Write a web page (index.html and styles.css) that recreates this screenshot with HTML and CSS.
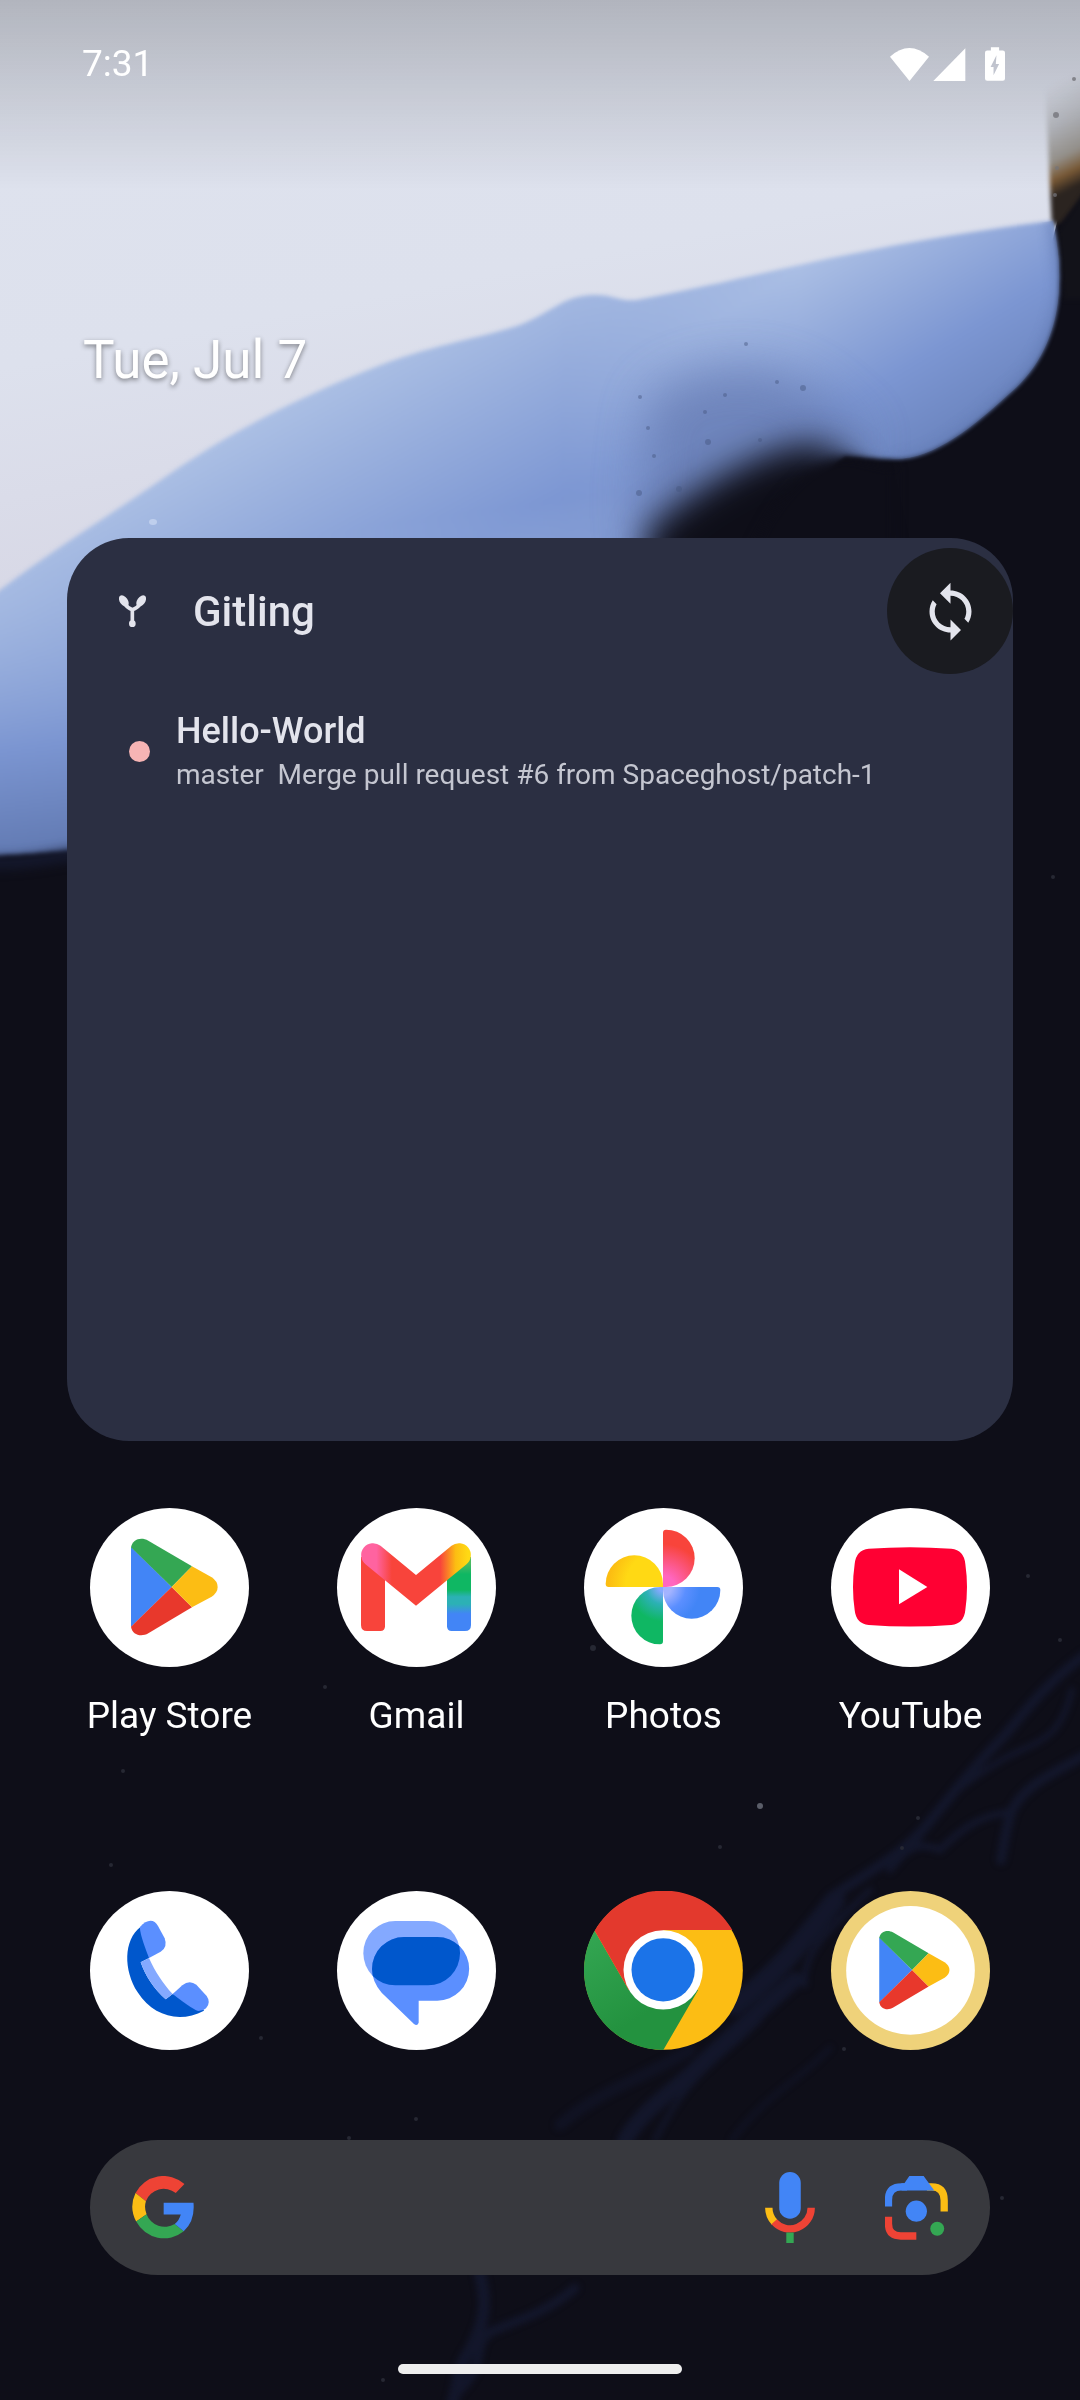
FILE: index.html
```html
<!DOCTYPE html>
<html lang="en">
<head>
<meta charset="utf-8">
<meta name="viewport" content="width=device-width, initial-scale=1">
<title>Home screen</title>
<link rel="stylesheet" href="styles.css">
</head>
<body>
<svg class="wallpaper" viewBox="0 0 1080 2400" preserveAspectRatio="xMidYMin slice" color-interpolation-filters="sRGB" aria-hidden="true">
  <defs>
    <linearGradient id="sky" x1="0" y1="0" x2="0.3" y2="1">
      <stop offset="0" stop-color="#dfe3ee"/><stop offset="0.5" stop-color="#dde1ed"/><stop offset="1" stop-color="#d4d2e1"/>
    </linearGradient>
    <linearGradient id="blue" gradientUnits="userSpaceOnUse" x1="330" y1="370" x2="520" y2="720">
      <stop offset="0" stop-color="#adc1e5"/><stop offset="0.55" stop-color="#7d97d3"/><stop offset="1" stop-color="#6f88c4"/>
    </linearGradient>
    <linearGradient id="blueLeft" gradientUnits="userSpaceOnUse" x1="0" y1="580" x2="40" y2="860">
      <stop offset="0" stop-color="#adc1e5" stop-opacity="0"/><stop offset="0.6" stop-color="#7b95d1"/><stop offset="1" stop-color="#6078b0"/>
    </linearGradient>
    <linearGradient id="blueRight" gradientUnits="userSpaceOnUse" x1="830" y1="250" x2="950" y2="450">
      <stop offset="0" stop-color="#aabee4"/><stop offset="0.6" stop-color="#7c96d2"/><stop offset="1" stop-color="#6a83bd"/>
    </linearGradient>
    <linearGradient id="fadeIn" gradientUnits="userSpaceOnUse" x1="560" y1="0" x2="800" y2="0">
      <stop offset="0" stop-color="#000"/><stop offset="1" stop-color="#fff"/>
    </linearGradient>
    <mask id="rightMask" maskUnits="userSpaceOnUse" x="0" y="0" width="1080" height="900"><rect width="1080" height="900" fill="url(#fadeIn)"/></mask>
    <linearGradient id="rim" gradientUnits="userSpaceOnUse" x1="1040" y1="90" x2="1085" y2="182">
      <stop offset="0" stop-color="#c4c7cd" stop-opacity="0"/><stop offset="0.4" stop-color="#b8bac0"/><stop offset="0.68" stop-color="#99958f"/><stop offset="0.85" stop-color="#7a5a36"/><stop offset="1" stop-color="#2b2420"/>
    </linearGradient>
    <linearGradient id="scrim" x1="0" y1="0" x2="0" y2="1">
      <stop offset="0" stop-color="#000" stop-opacity="0.2"/><stop offset="0.5" stop-color="#000" stop-opacity="0.1"/><stop offset="1" stop-color="#000" stop-opacity="0"/>
    </linearGradient>
    <filter id="soft2" filterUnits="userSpaceOnUse" x="-50" y="-50" width="1200" height="2500"><feGaussianBlur stdDeviation="2"/></filter>
    <filter id="soft3" filterUnits="userSpaceOnUse" x="-50" y="-50" width="1200" height="2500"><feGaussianBlur stdDeviation="3"/></filter>
    <filter id="soft6" filterUnits="userSpaceOnUse" x="-50" y="-50" width="1200" height="2500"><feGaussianBlur stdDeviation="6"/></filter>
    <filter id="soft18" filterUnits="userSpaceOnUse" x="-50" y="-50" width="1200" height="2500"><feGaussianBlur stdDeviation="17"/></filter>
    <filter id="soft24" filterUnits="userSpaceOnUse" x="-50" y="-50" width="1200" height="2500"><feGaussianBlur stdDeviation="24"/></filter>
    <clipPath id="waveClip"><path id="wave" d="M-20 604 L0 590 C60 545 110 515 158 482 C235 428 310 392 386 363 C435 345 480 338 517 326 C550 314 562 296 592 295 C612 294 620 302 637 300 C690 290 730 281 778 270 C870 249 960 232 1053 221 C1056 240 1060 255 1059 285 C1058 330 1040 368 1010 393 C975 425 935 459 895 459 C872 459 858 456 845 456 C820 470 800 520 790 600 L690 640 C500 700 300 850 -20 856 Z"/></clipPath>
  </defs>
  <rect width="1080" height="2400" fill="#0e0e18"/>
  <path d="M-20 -20 H1100 V130 L1058 218 L1050 250 L900 330 L500 480 L-20 700 Z" fill="url(#sky)"/>
  <path d="M1044 60 H1100 V176 L1062 222 L1052 228 Z" fill="url(#rim)" filter="url(#soft2)"/>
  <path d="M1100 168 L1058 232 L1064 300 L1100 300 Z" fill="#121219" filter="url(#soft2)"/>
  <g filter="url(#soft2)">
    <use href="#wave" fill="url(#blue)"/>
    <use href="#wave" fill="url(#blueLeft)"/>
    <use href="#wave" fill="url(#blueRight)" mask="url(#rightMask)"/>
  </g>
  <g clip-path="url(#waveClip)">
    <path d="M650 400 C690 365 770 355 820 395 L870 440 L650 600 L640 500 Z" fill="#6479b0" opacity="0.7" filter="url(#soft24)"/>
    <path d="M1053 215 L1062 285 C1058 330 1040 368 1010 393 C975 425 935 462 895 462" fill="none" stroke="#5f77b0" stroke-width="12" opacity="0.6" filter="url(#soft6)"/>
  </g>
  <path d="M646 640 L646 530 C690 492 740 462 785 448 C815 440 830 446 850 462 L890 640 Z" fill="#0e0e18" filter="url(#soft18)"/>
  <path d="M730 640 C740 540 790 474 835 458 C855 454 870 464 895 467 L895 640 Z" fill="#0e0e18" filter="url(#soft6)"/>
  <path d="M-20 862 C20 866 60 856 120 846" stroke="#161b33" stroke-width="10" fill="none" filter="url(#soft6)"/>
  <g fill="#45567f" opacity="0.45">
    <circle cx="639" cy="493" r="3"/><circle cx="679" cy="489" r="3"/><circle cx="654" cy="456" r="2"/><circle cx="708" cy="442" r="3"/><circle cx="705" cy="412" r="2"/><circle cx="760" cy="440" r="2"/><circle cx="803" cy="388" r="3"/><circle cx="640" cy="397" r="2"/><circle cx="746" cy="344" r="2"/><circle cx="777" cy="382" r="2"/><circle cx="648" cy="428" r="2"/><circle cx="725" cy="395" r="2"/>
  </g>
  <g fill="#77777d" opacity="0.7"><circle cx="1056" cy="115" r="3"/><circle cx="1074" cy="79" r="2"/><circle cx="1057" cy="168" r="2"/><circle cx="1055" cy="195" r="2"/></g>
  <ellipse cx="153" cy="522" rx="4" ry="3" fill="#ccd9f2" opacity="0.7"/>
  <g fill="none" stroke="#161b34" stroke-linecap="round" opacity="0.7" filter="url(#soft3)">
    <path stroke-width="10" d="M1085 1655 C1050 1680 1030 1705 1005 1735 C975 1765 960 1785 935 1815 C905 1855 870 1870 830 1898"/>
    <path stroke-width="6" d="M1072 1690 C1060 1740 1040 1740 1005 1758 C960 1785 940 1800 912 1850"/>
    <path stroke-width="10" d="M1085 1755 C1050 1775 1025 1785 1012 1810 C1005 1830 1004 1845 1001 1860"/>
    <path stroke-width="7" d="M1010 1812 C980 1815 960 1830 940 1850 C915 1840 905 1850 890 1870"/>
    <path stroke-width="20" d="M835 1900 C800 1945 775 1975 735 2005"/>
    <path stroke-width="6" d="M870 1890 C840 1920 800 1950 805 1985"/>
    <path stroke-width="16" d="M795 1980 C760 2010 720 2045 690 2075 C660 2100 640 2115 625 2140"/>
    <path stroke-width="12" d="M690 2050 C640 2080 600 2090 560 2125" opacity="0.6"/>
    <path stroke-width="5" d="M760 2020 C720 2060 690 2070 655 2140"/>
    <path stroke-width="5" d="M830 2048 C800 2080 765 2095 732 2140" opacity="0.7"/>
    <path stroke-width="12" d="M480 2275 C490 2310 480 2330 470 2350 C455 2370 460 2385 450 2410"/>
    <path stroke-width="9" d="M575 2288 C550 2310 520 2320 495 2330 C470 2340 490 2360 460 2390"/>
  </g>
  <g fill="#262833">
    <circle cx="760" cy="1806" r="3" fill="#5a5d68"/><circle cx="720" cy="1847" r="2"/><circle cx="918" cy="1818" r="2"/><circle cx="902" cy="1848" r="2"/><circle cx="1028" cy="1576" r="2"/><circle cx="1060" cy="1640" r="2"/><circle cx="325" cy="1687" r="2"/><circle cx="123" cy="1771" r="2"/><circle cx="111" cy="1865" r="2"/><circle cx="261" cy="2038" r="2"/><circle cx="593" cy="1648" r="3"/><circle cx="416" cy="2119" r="2"/><circle cx="349" cy="2138" r="2"/><circle cx="383" cy="2380" r="2"/><circle cx="1002" cy="2198" r="2"/><circle cx="844" cy="2049" r="2"/><circle cx="1053" cy="877" r="2"/>
  </g>
  <rect width="1080" height="190" fill="url(#scrim)"/>
</svg>

<div class="screen">
  <header class="status">
    <time class="clock">7:31</time>
    <div class="status-icons">
      <svg class="wifi" viewBox="153 80 117 99" aria-hidden="true"><path d="M211.500 179 L153 106 Q211 54 270 106Z"/></svg>
      <svg class="signal" viewBox="281 80 98 100" aria-hidden="true"><path d="M378 81 V180 H281Z"/></svg>
      <svg class="battery" viewBox="435 81 61 102" aria-hidden="true"><path d="M453 81 H478 V91 H489 Q496 91 496 98 V176 Q496 183 489 183 H442 Q435 183 435 176 V98 Q435 91 442 91 H453Z M470 105 L452 141 H461 V166 L478 132 H468Z" fill-rule="evenodd"/></svg>
    </div>
  </header>

  <main class="home">
    <p class="date">Tue, Jul 7</p>

    <section class="widget" aria-labelledby="widget-title">
      <div class="widget-head">
        <svg class="sprout" viewBox="178 196 80 96" aria-hidden="true">
          <g fill="#e3e4ec"><ellipse cx="192" cy="214" rx="12" ry="19" transform="rotate(-35 192 214)"/><ellipse cx="244" cy="214" rx="12" ry="19" transform="rotate(35 244 214)"/><circle cx="217.500" cy="282" r="10"/></g>
          <path d="M197 224 Q202 234 217.500 240 V280 M239 224 Q234 234 217.500 240" fill="none" stroke="#e3e4ec" stroke-width="11"/>
        </svg>
        <h1 class="widget-title" id="widget-title">Gitling</h1>
        <button class="refresh" type="button" aria-label="Refresh">
          <svg viewBox="0 0 24 24" aria-hidden="true"><path d="M12 4V1L8 5l4 4V6c3.310 0 6 2.690 6 6 0 1.010-.250 1.970-.700 2.800l1.460 1.460C19.540 15.030 20 13.570 20 12c0-4.420-3.580-8-8-8zm0 14c-3.310 0-6-2.690-6-6 0-1.010.250-1.970.700-2.800L5.240 7.740C4.460 8.970 4 10.430 4 12c0 4.420 3.580 8 8 8v3l4-4-4-4v3z"/></svg>
        </button>
      </div>
      <ul class="repos">
        <li class="repo">
          <span class="dot"></span>
          <div class="repo-text">
            <h2 class="repo-name">Hello-World</h2>
            <p class="repo-commit">master&nbsp; Merge pull request #6 from Spaceghost/patch-1</p>
          </div>
        </li>
      </ul>
    </section>

    <nav class="apps" aria-label="Apps">
      <a class="app" href="#play-store">
        <svg class="app-icon" viewBox="60 54 477 477" aria-hidden="true">
          <circle cx="298.500" cy="292.500" r="238.500" fill="#fff"/>
          <g id="play">
            <path d="M183 170 L305 291 L183 411Z" fill="#4285f6"/>
            <path d="M183 172 C187 149 212 139 235 152 L366 229 L305 291Z" fill="#34a753"/>
            <path d="M183 410 C187 434 212 443 235 430 L366 352 L305 291Z" fill="#e8382c"/>
            <path d="M366 229 L425 262 Q443 274 443 291 Q443 308 425 320 L366 352 L305 291Z" fill="#fcbd14"/>
          </g>
        </svg>
        <span class="app-label">Play Store</span>
      </a>
      <a class="app" href="#gmail">
        <svg class="app-icon" viewBox="801 54 477 477" aria-hidden="true">
          <defs>
            <linearGradient id="gm1" gradientUnits="userSpaceOnUse" x1="873" y1="0" x2="1203" y2="0"><stop offset="0.14" stop-color="#ff63a0"/><stop offset="0.28" stop-color="#f8443b"/><stop offset="0.72" stop-color="#f8443b"/><stop offset="0.86" stop-color="#fcbd12"/><stop offset="0.97" stop-color="#ffd914"/></linearGradient>
            <linearGradient id="gm2" gradientUnits="userSpaceOnUse" x1="0" y1="210" x2="0" y2="423"><stop offset="0.05" stop-color="#4dba63"/><stop offset="0.2" stop-color="#0fb763"/><stop offset="0.42" stop-color="#0fb763"/><stop offset="0.52" stop-color="#2cb1b5"/><stop offset="0.62" stop-color="#2cb1b5"/><stop offset="0.76" stop-color="#4285f6"/></linearGradient>
          </defs>
          <circle cx="1039.500" cy="292.500" r="238.500" fill="#fff"/>
          <path d="M873 200 V405 Q873 423 891 423 H931 Q945 423 945 409 V230Z" fill="#f8443b"/>
          <path d="M1203 200 V405 Q1203 423 1185 423 H1145 Q1131 423 1131 409 V230Z" fill="url(#gm2)"/>
          <path d="M909 195 L1038 301 L1167 195" fill="none" stroke="url(#gm1)" stroke-width="71" stroke-linecap="round" stroke-linejoin="miter"/>
        </svg>
        <span class="app-label">Gmail</span>
      </a>
      <a class="app" href="#photos">
        <svg class="app-icon" viewBox="72 54 477 477" aria-hidden="true">
          <defs>
            <radialGradient id="ph1" gradientUnits="userSpaceOnUse" cx="309" cy="291" r="172"><stop offset="0.2" stop-color="#ff66c0"/><stop offset="0.75" stop-color="#f8443b"/></radialGradient>
            <radialGradient id="ph2" gradientUnits="userSpaceOnUse" cx="309" cy="291" r="172"><stop offset="0.15" stop-color="#a3b3ff"/><stop offset="0.4" stop-color="#5b8fff"/><stop offset="0.65" stop-color="#4285f6"/></radialGradient>
            <radialGradient id="ph3" gradientUnits="userSpaceOnUse" cx="309" cy="291" r="172"><stop offset="0.08" stop-color="#84a9ff"/><stop offset="0.3" stop-color="#2cb1b5"/><stop offset="0.6" stop-color="#0fb763"/></radialGradient>
            <radialGradient id="ph4" gradientUnits="userSpaceOnUse" cx="309" cy="291" r="172"><stop offset="0.65" stop-color="#ffd914"/><stop offset="0.95" stop-color="#fcbd12"/></radialGradient>
          </defs>
          <circle cx="310.500" cy="292.500" r="238.500" fill="#fff"/>
          <path d="M309 291 V128 Q309 119 318 119 A86 86 0 0 1 318 291Z" fill="url(#ph1)"/>
          <path d="M309 291 H472 Q481 291 481 300 A86 86 0 0 1 309 300Z" fill="url(#ph2)"/>
          <path d="M309 291 V454 Q309 463 300 463 A86 86 0 0 1 300 291Z" fill="url(#ph3)"/>
          <path d="M309 291 H146 Q137 291 137 282 A86 86 0 0 1 309 282Z" fill="url(#ph4)"/>
        </svg>
        <span class="app-label">Photos</span>
      </a>
      <a class="app" href="#youtube">
        <svg class="app-icon" viewBox="813 54 477 477" aria-hidden="true">
          <circle cx="1051.500" cy="292.500" r="238.500" fill="#fff"/>
          <path d="M926 176 Q1050 167 1174 176 Q1212 180 1216 222 Q1226 291 1216 360 Q1212 401 1174 405 Q1050 414 926 405 Q888 401 884 360 Q874 291 884 222 Q888 180 926 176Z" fill="#ff0033"/>
          <path d="M1017 238 L1102 291 L1017 343Z" fill="#fff"/>
        </svg>
        <span class="app-label">YouTube</span>
      </a>
    </nav>

    <nav class="dock" aria-label="Dock">
      <a class="app" href="#phone" aria-label="Phone">
        <svg class="app-icon" viewBox="60 63 477 477" aria-hidden="true">
          <circle cx="298.500" cy="301.500" r="238.500" fill="#fff"/>
          <path d="M212 170 C160 210 160 300 203 367 C250 440 330 460 402 422 L380 380 L308 372 L287 388 C252 358 225 315 212 277 L237 264 L235 190Z" fill="#0057cc"/>
          <path d="M212 277 L237 264 C255 305 280 342 308 372 L287 388 C252 358 225 315 212 277Z" fill="#84a9ff"/>
          <path d="M210 171 C230 148 252 146 264 168 L284 205 Q294 232 272 245 L237 264 Q208 190 210 171Z" fill="#5b8fff"/>
          <path d="M308 372 L337 346 Q358 328 379 344 L410 378 Q424 398 408 415 Q400 423 386 423 Q374 423 308 372Z" fill="#5b8fff"/>
        </svg>
      </a>
      <a class="app" href="#messages" aria-label="Messages">
        <svg class="app-icon" viewBox="801 63 477 477" aria-hidden="true">
          <defs><clipPath id="bubble"><path id="bubble-shape" d="M1002 201 H1102 A95.500 95.500 0 0 1 1102 392 H1046 V458 Q1042 469 1032 462 L935 368 Q906 335 906 297 A96 96 0 0 1 1002 201Z"/></clipPath></defs>
          <circle cx="1039.500" cy="301.500" r="238.500" fill="#fff"/>
          <rect x="880" y="153" width="290" height="193" rx="96" fill="#84a9ff"/>
          <use href="#bubble-shape" fill="#5b8fff"/>
          <rect x="880" y="153" width="290" height="193" rx="96" fill="#0057cc" clip-path="url(#bubble)"/>
        </svg>
      </a>
      <a class="app" href="#chrome" aria-label="Chrome">
        <svg class="app-icon" viewBox="72 63 477 477" aria-hidden="true">
          <defs><linearGradient id="chg" x1="0" y1="0" x2="0.6" y2="1"><stop offset="0" stop-color="#34a753"/><stop offset="0.75" stop-color="#23923f"/></linearGradient></defs>
          <circle cx="310.500" cy="301.500" r="238" fill="#fcbd14"/>
          <path d="M104 182 L207 361 L310 301 L414 361 L310 540 A238.500 238.500 0 0 1 104 182Z" fill="url(#chg)"/>
          <path d="M104 182 A238.500 238.500 0 0 1 517 180 H310 V301 L207 361Z" fill="#e3392d"/>
          <circle cx="309.500" cy="299.500" r="119" fill="#fff"/>
          <circle cx="309.500" cy="299.500" r="95" fill="#1b73e8"/>
        </svg>
      </a>
      <a class="app" href="#play-games" aria-label="Play Store">
        <svg class="app-icon" viewBox="813 63 477 477" aria-hidden="true">
          <circle cx="1051.500" cy="301.500" r="238.500" fill="#efd27a"/>
          <circle cx="1051.500" cy="301" r="193" fill="#fff"/>
          <use href="#play" transform="translate(1063 300) scale(0.810) translate(-313 -291)"/>
        </svg>
      </a>
    </nav>

    <form class="search" role="search">
      <svg class="google" viewBox="188 166 184 188" aria-hidden="true">
        <path d="M198 217 A93.500 93.500 0 0 1 344 190 L318 217 A57 57 0 0 0 229 241Z" fill="#ee4335"/>
        <path d="M198 217 A94 94 0 0 0 200 302 L231 280 A57 57 0 0 1 229 241Z" fill="#fcbd14"/>
        <path d="M200 302 A94 94 0 0 0 342 331 L315 309 A57 57 0 0 1 231 280Z" fill="#34a753"/>
        <path d="M282 246 H371 Q376 300 342 331 L315 309 Q328 300 333 281 H282Z" fill="#4285f6"/>
      </svg>
      <input class="search-input" type="text" aria-label="Search">
      <button class="search-button" type="button" aria-label="Voice search">
        <svg class="mic" viewBox="136 158 148 211" aria-hidden="true">
          <rect x="178" y="158" width="64" height="139" rx="32" fill="#4285f6"/>
          <g fill="none" stroke-width="22"><path d="M147 264 A63 63 0 0 0 164 307" stroke="#fcbd14"/><path d="M273 264 A63 63 0 0 1 163 306" stroke="#ee4335"/></g>
          <rect x="199" y="338" width="22" height="31" fill="#34a753"/>
        </svg>
      </button>
      <button class="search-button" type="button" aria-label="Lens">
        <svg class="lens" viewBox="494 166 189 193" aria-hidden="true">
          <g fill="none" stroke-width="22"><path d="M620 199 H634 Q672 199 672 240 V273" stroke="#fcbd14"/><path d="M504 258 V238 Q504 199 543 199 H560" stroke="#4285f6"/><path d="M504 289 V310 Q504 347 541 347 H588" stroke="#ee4335"/></g>
          <path d="M543 188 H552 L567 166 H610 L642 210 H543Z" fill="#4285f6"/>
          <circle cx="588" cy="272" r="32" fill="#4285f6"/><circle cx="651" cy="325" r="21" fill="#34a753"/>
        </svg>
      </button>
    </form>
  </main>

  <footer class="gesture"><span class="gesture-pill"></span></footer>
</div>
</body>
</html>
```
FILE: styles.css
```css
* { box-sizing: border-box; }

body {
  margin: 0;
  background: #0e0e18;
  color: #fff;
  font-family: Roboto, "Noto Sans", sans-serif;
}

h1, h2, p, ul { margin: 0; padding: 0; }

button {
  padding: 0;
  border: 0;
  background: none;
  color: inherit;
  font: inherit;
}

svg { display: block; }

.wallpaper {
  position: absolute;
  inset: 0;
  width: 100%;
  height: 100%;
  z-index: -1;
}

.screen {
  display: flex;
  flex-direction: column;
  min-height: 100vh;
}

.status {
  display: flex;
  justify-content: space-between;
  align-items: center;
  padding: 42px 75px 40px 82px;
}

.clock { font-size: 37px; line-height: 44px; }

.status-icons { display: flex; align-items: center; gap: 4px; fill: #fff; }
.wifi { width: 39px; height: 33px; }
.signal { width: 33px; height: 33px; }
.battery { width: 20px; height: 34px; margin-left: 15px; }

.home { display: flex; flex-direction: column; flex: 1; }

.date {
  padding: 202px 83px 146px;
  font-size: 53px;
  line-height: 64px;
  text-shadow: 0 2px 5px rgba(0, 0, 0, 0.45);
}

.widget {
  min-height: 903px;
  margin: 0 67px;
  padding-top: 10px;
  border-radius: 62px;
  background: #2b2f42;
  color: #e3e4ec;
}

.widget-head {
  display: flex;
  align-items: center;
  padding-left: 52px;
}

.sprout { width: 27px; height: 32px; }

.widget-title {
  flex: 1;
  padding: 2px 0 0 47px;
  font-size: 42px;
  font-weight: 500;
  line-height: 48px;
}

.refresh {
  display: grid;
  place-items: center;
  width: 126px;
  height: 126px;
  border-radius: 50%;
  background: #1a1b20;
  fill: #e3e4ec;
}
.refresh svg { width: 63px; height: 63px; }

.repos { padding: 35px 62px 0; list-style: none; }

.repo { display: flex; align-items: center; gap: 26px; }

.dot { width: 21px; height: 21px; border-radius: 50%; background: #f6b4b4; }

.repo-text { display: grid; gap: 4px; }
.repo-name { font-size: 36px; font-weight: 500; line-height: 44px; }
.repo-commit { color: #c4c6d0; font-size: 28px; line-height: 36px; }

.apps, .dock {
  display: grid;
  grid-template-columns: repeat(4, 1fr);
  padding: 0 46px;
}
.apps { margin-top: 67px; }
.dock { margin-top: 153px; }

.app {
  display: flex;
  flex-direction: column;
  align-items: center;
  gap: 27px;
  color: #fff;
  text-decoration: none;
}
.app-icon { width: 159px; height: 159px; }
.app-label { font-size: 37px; line-height: 44px; }

.search {
  display: flex;
  align-items: center;
  margin: 90px 90px 0;
  padding: 32px 42px;
  border-radius: 68px;
  background: #38393e;
}
.google { width: 62px; height: 63px; }
.search-input {
  flex: 1;
  min-width: 0;
  height: 71px;
  padding: 0 24px;
  border: 0;
  outline: 0;
  background: none;
  color: #fff;
  font: 36px Roboto, sans-serif;
}
.mic { width: 50px; height: 71px; }
.lens { width: 63px; height: 64px; }
.search-button + .search-button { margin-left: 70px; }

.gesture { display: flex; justify-content: center; padding: 89px 0 26px; }
.gesture-pill { width: 284px; height: 10px; border-radius: 5px; background: #eee; }
```
